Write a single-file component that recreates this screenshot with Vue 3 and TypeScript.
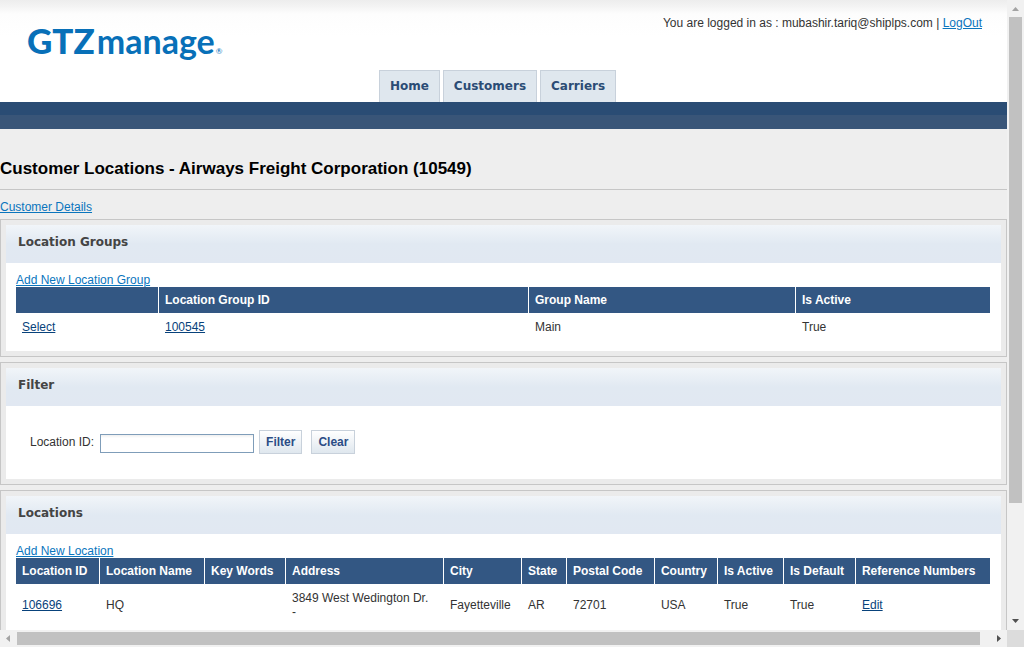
<script setup lang="ts">
import { ref } from 'vue'

interface Column {
  label: string
  width: number
}

const groupColumns: Column[] = [
  { label: '', width: 143 },
  { label: 'Location Group ID', width: 370 },
  { label: 'Group Name', width: 267 },
  { label: 'Is Active', width: 194 },
]

const locationColumns: Column[] = [
  { label: 'Location ID', width: 84 },
  { label: 'Location Name', width: 105 },
  { label: 'Key Words', width: 81 },
  { label: 'Address', width: 158 },
  { label: 'City', width: 78 },
  { label: 'State', width: 45 },
  { label: 'Postal Code', width: 88 },
  { label: 'Country', width: 63 },
  { label: 'Is Active', width: 66 },
  { label: 'Is Default', width: 72 },
  { label: 'Reference Numbers', width: 134 },
]

const groups = [{ id: '100545', name: 'Main', active: 'True' }]

const locations = [
  {
    id: '106696',
    name: 'HQ',
    keyWords: '',
    address: '3849 West Wedington Dr.',
    address2: '-',
    city: 'Fayetteville',
    state: 'AR',
    postal: '72701',
    country: 'USA',
    active: 'True',
    isDefault: 'True',
  },
]

const tabs = ['Home', 'Customers', 'Carriers']
const locationId = ref('')

const share = (columns: Column[], column: Column): string => {
  const total = columns.reduce((sum, c) => sum + c.width, 0)
  return `${(column.width / total) * 100}%`
}
</script>

<template>
  <div class="window">
    <div class="page">
      <header class="header">
        <div class="top">
          <a class="logo" href="#" aria-label="GTZmanage">
            <span class="logo-gtz">GTZ</span><span class="logo-manage">manage</span><span class="logo-mark">®</span>
          </a>
          <p class="login">
            You are logged in as : mubashir.tariq@shiplps.com | <a href="#">LogOut</a>
          </p>
        </div>
        <nav class="tabs">
          <a v-for="tab in tabs" :key="tab" class="tab" href="#">{{ tab }}</a>
        </nav>
      </header>
      <div class="bar"></div>

      <main>
        <h1>Customer Locations - Airways Freight Corporation (10549)</h1>
        <div class="crumb"><a href="#">Customer Details</a></div>

        <section class="panel">
          <h2>Location Groups</h2>
          <div class="body">
            <a class="add" href="#">Add New Location Group</a>
            <table>
              <colgroup>
                <col v-for="c in groupColumns" :key="c.label" :style="{ width: share(groupColumns, c) }" />
              </colgroup>
              <thead>
                <tr>
                  <th v-for="c in groupColumns" :key="c.label" scope="col">{{ c.label }}</th>
                </tr>
              </thead>
              <tbody>
                <tr v-for="g in groups" :key="g.id">
                  <td><a href="#">Select</a></td>
                  <td><a href="#">{{ g.id }}</a></td>
                  <td>{{ g.name }}</td>
                  <td>{{ g.active }}</td>
                </tr>
              </tbody>
            </table>
          </div>
        </section>

        <section class="panel">
          <h2>Filter</h2>
          <form class="filter" @submit.prevent>
            <label for="location-id">Location ID:</label>
            <input id="location-id" v-model="locationId" type="text" />
            <button type="submit">Filter</button>
            <button type="button" class="clear" @click="locationId = ''">Clear</button>
          </form>
        </section>

        <section class="panel">
          <h2>Locations</h2>
          <div class="body">
            <a class="add" href="#">Add New Location</a>
            <table>
              <colgroup>
                <col v-for="c in locationColumns" :key="c.label" :style="{ width: share(locationColumns, c) }" />
              </colgroup>
              <thead>
                <tr>
                  <th v-for="c in locationColumns" :key="c.label" scope="col">{{ c.label }}</th>
                </tr>
              </thead>
              <tbody>
                <tr v-for="l in locations" :key="l.id">
                  <td><a href="#">{{ l.id }}</a></td>
                  <td>{{ l.name }}</td>
                  <td>{{ l.keyWords }}</td>
                  <td>{{ l.address }}<br />{{ l.address2 }}</td>
                  <td>{{ l.city }}</td>
                  <td>{{ l.state }}</td>
                  <td>{{ l.postal }}</td>
                  <td>{{ l.country }}</td>
                  <td>{{ l.active }}</td>
                  <td>{{ l.isDefault }}</td>
                  <td><a href="#">Edit</a></td>
                </tr>
              </tbody>
            </table>
          </div>
        </section>
      </main>
    </div>

    <div class="scroll vertical" aria-hidden="true">
      <svg width="17" height="17" viewBox="0 0 17 17"><path d="M5 11h7L8.500 7z" fill="#a3a3a3" /></svg>
      <div class="track"><div class="thumb"></div></div>
      <svg width="17" height="17" viewBox="0 0 17 17"><path d="M5 6h7L8.500 10z" fill="#505050" /></svg>
    </div>
    <div class="scroll horizontal" aria-hidden="true">
      <svg width="17" height="17" viewBox="0 0 17 17"><path d="M10 5v7L6 8.500z" fill="#a3a3a3" /></svg>
      <div class="track"><div class="thumb"></div></div>
      <svg width="17" height="17" viewBox="0 0 17 17"><path d="M7 5v7L11 8.500z" fill="#505050" /></svg>
    </div>
    <div class="corner"></div>
  </div>
</template>

<style>
body {
  margin: 0;
  background: #eee;
}
</style>

<style scoped>
.window {
  display: grid;
  grid-template: minmax(0, 1fr) 17px / minmax(0, 1fr) 17px;
  height: 100vh;
  font: 12px/14px 'Liberation Sans', Arial, sans-serif;
  color: #333;
}
.page {
  overflow: hidden;
  background: #eee;
}
a {
  color: #0a75bd;
}
.header {
  background: linear-gradient(#ededed 0, #f2f2f2 5px, #fdfdfd 14px, #fff 36px);
}
.top {
  display: flex;
  justify-content: space-between;
  height: 70px;
}
.logo {
  display: flex;
  align-items: baseline;
  margin: 18px 0 0 27px;
  height: 44px;
  font-family: Lato, sans-serif;
  line-height: 44px;
  color: #0870b8;
  text-decoration: none;
}
.logo-gtz {
  font-size: 35px;
  font-weight: 900;
}
.logo-manage {
  margin-left: 2px;
  font-size: 34px;
  font-weight: 700;
}
.logo-mark {
  margin-left: 1px;
  font-size: 8px;
}
.login {
  margin: 16px 25px 0 0;
}
.tabs {
  display: flex;
  justify-content: center;
  gap: 3px;
  padding-right: 12px;
}
.tab {
  padding: 8px 10px;
  border: 1px solid #c8d1db;
  border-bottom: 0;
  background: #dfe7ee;
  font: bold 12px/15px Verdana, 'DejaVu Sans', sans-serif;
  color: #2b4c75;
  text-decoration: none;
}
.bar {
  height: 27px;
  background: linear-gradient(#2a4c74 13px, #395578 13px);
}
h1 {
  margin: 0;
  padding: 29px 0 10px;
  border-bottom: 1px solid #c6c6c6;
  font-size: 17px;
  line-height: 21px;
  color: #000;
}
.crumb {
  padding: 10px 0 5px;
}
.panel {
  margin-bottom: 5px;
  padding: 5px;
  border: 1px solid #c6c6c6;
  background: #ebebeb;
}
h2 {
  margin: 0;
  padding: 10px 12px 13px;
  background: linear-gradient(#f1f5f9, #e1e9f2 50%, #e1e8f2);
  font: bold 12px/15px Verdana, 'DejaVu Sans', sans-serif;
  color: #444;
}
.body {
  padding: 10px 11px 10px 10px;
  background: #fff;
}
.add {
  display: block;
  width: fit-content;
}
table {
  width: 100%;
  table-layout: fixed;
  border-collapse: separate;
  border-spacing: 0;
}
th {
  height: 14px;
  padding: 6px 0 6px 6px;
  border-right: 1px solid #fff;
  background: #335783;
  color: #fff;
  text-align: left;
  white-space: nowrap;
}
th:last-child {
  border-right: 0;
}
td {
  padding: 7px 0 7px 6px;
  white-space: nowrap;
}
td a {
  color: #08427b;
}
.filter {
  display: flex;
  align-items: center;
  padding: 24px 24px 25px;
  background: #fff;
}
input {
  box-sizing: border-box;
  width: 154px;
  height: 19px;
  margin: 2px 5px 0 6px;
  padding: 1px 3px;
  border: 1px solid #7f9db9;
  background: linear-gradient(#efefef, #fff 3px);
  font: inherit;
}
button {
  height: 24px;
  padding: 0 6px;
  border: 1px solid #c8d1db;
  background: linear-gradient(#fff, #dfe7ee);
  font: bold 12px/14px 'Liberation Sans', Arial, sans-serif;
  color: #2b4c85;
}
.clear {
  margin-left: 9px;
}
.scroll {
  display: flex;
  background: #f1f1f1;
}
.scroll svg {
  display: block;
  flex: none;
}
.vertical {
  grid-area: 1 / 2;
  flex-direction: column;
}
.horizontal {
  grid-area: 2 / 1;
}
.track {
  flex: 1;
}
.thumb {
  background: #c1c1c1;
}
.vertical .thumb {
  width: 13px;
  height: 81.5%;
  margin: 0 2px;
}
.horizontal .track {
  padding: 2px 0;
}
.horizontal .thumb {
  width: 99%;
  height: 13px;
}
.corner {
  background: #dcdcdc;
}
</style>
